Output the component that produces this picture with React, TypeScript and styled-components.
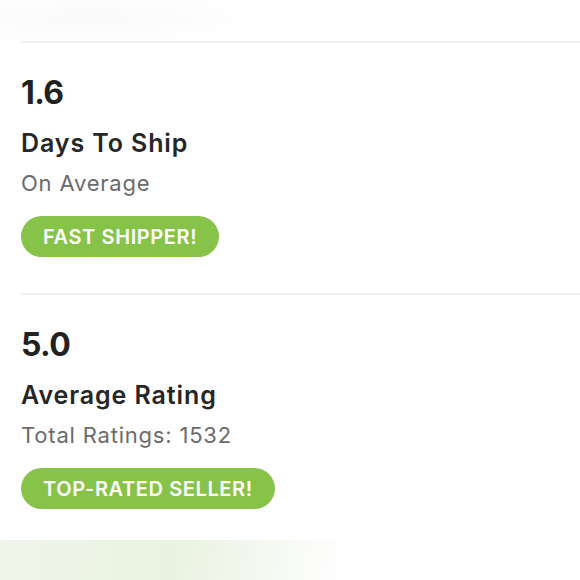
import styled, { createGlobalStyle } from 'styled-components';

const GlobalStyle = createGlobalStyle`
  html, body {
    margin: 0;
    padding: 0;
    background: #ffffff;
  }
  body {
    font-family: Inter, "Open Sans", Arial, sans-serif;
    color: #222222;
    -webkit-font-smoothing: antialiased;
  }
`;

const Page = styled.div`
  width: 580px;
  height: 580px;
  overflow: hidden;
  display: flex;
  flex-direction: column;
  background: #ffffff;
`;

const TopFade = styled.div`
  height: 41px;
  background: radial-gradient(ellipse 260px 40px at 90px 18px, rgba(0, 0, 0, 0.025), rgba(0, 0, 0, 0) 70%);
`;

const Card = styled.div`
  padding-left: 21px;
  background: #ffffff;
`;

const Section = styled.section`
  border-top: 2px solid #efefef;
  padding: 30px 0 36px;
  display: flex;
  flex-direction: column;
  align-items: flex-start;
`;

const Value = styled.div`
  font-size: 32px;
  font-weight: 700;
  line-height: 40px;
  color: #222222;
  letter-spacing: -0.6px;
`;

const Title = styled.div`
  margin-top: 13px;
  font-size: 25px;
  font-weight: 600;
  line-height: 34px;
  color: #262626;
  letter-spacing: 0.9px;
`;

const Subtitle = styled.div`
  margin-top: 8px;
  font-size: 22px;
  line-height: 30px;
  color: #6b6b6b;
  letter-spacing: 0.8px;
`;

const Badge = styled.div`
  margin-top: 18px;
  height: 41px;
  padding: 0 22px;
  border-radius: 21px;
  background: #88c349;
  color: #ffffff;
  font-size: 20px;
  font-weight: 600;
  letter-spacing: 0.6px;
  text-transform: uppercase;
  display: flex;
  align-items: center;
`;

const BottomFade = styled.div`
  flex: 1;
  margin-top: -5px;
  background: linear-gradient(100deg, rgba(224, 236, 212, 0.5) 0%, rgba(226, 238, 214, 0.75) 30%, rgba(238, 244, 232, 0.5) 48%, rgba(255, 255, 255, 0) 60%);
`;

interface Stat {
  value: string;
  title: string;
  subtitle: string;
  badge: string;
}

const stats: Stat[] = [
  { value: '1.6', title: 'Days To Ship', subtitle: 'On Average', badge: 'Fast Shipper!' },
  { value: '5.0', title: 'Average Rating', subtitle: 'Total Ratings: 1532', badge: 'Top-Rated Seller!' },
];

export default function App() {
  return (
    <Page>
      <GlobalStyle />
      <TopFade />
      <Card>
        {stats.map((s) => (
          <Section key={s.title}>
            <Value>{s.value}</Value>
            <Title>{s.title}</Title>
            <Subtitle>{s.subtitle}</Subtitle>
            <Badge>{s.badge}</Badge>
          </Section>
        ))}
      </Card>
      <BottomFade />
    </Page>
  );
}
